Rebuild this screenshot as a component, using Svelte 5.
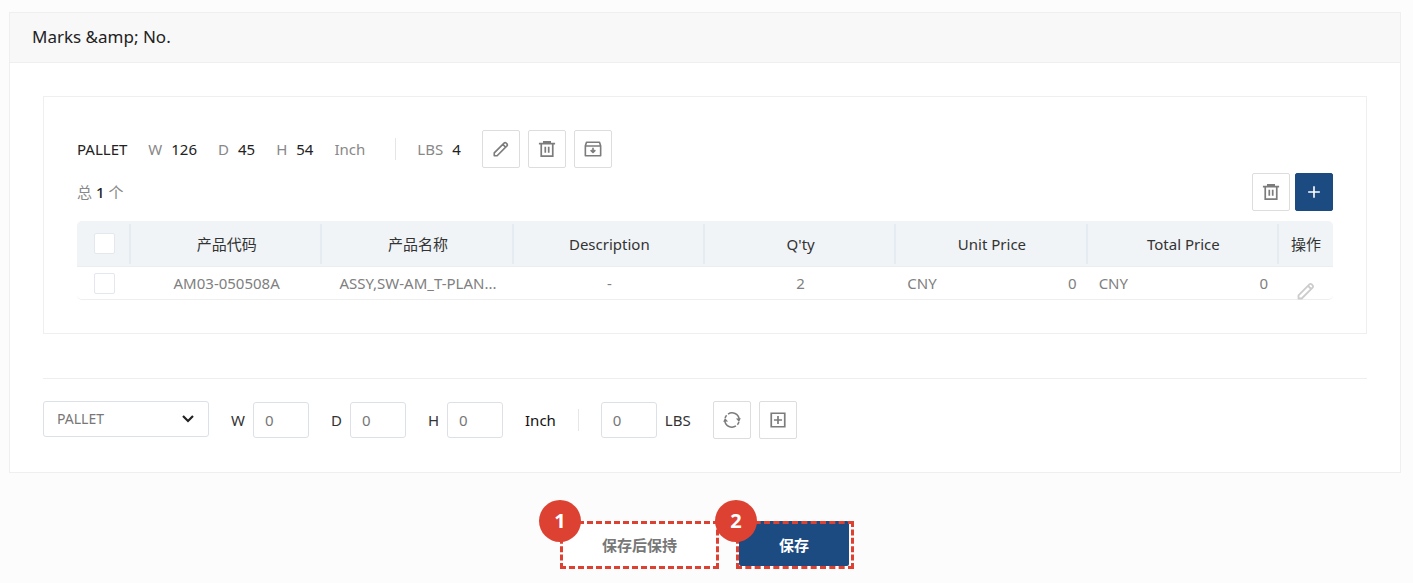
<script>
  const sizes = [
    { key: 'W', value: 126 },
    { key: 'D', value: 45 },
    { key: 'H', value: 54 }
  ];
  const columns = ['产品代码', '产品名称', 'Description', "Q'ty", 'Unit Price', 'Total Price'];
  let form = $state({ type: 'PALLET', W: '0', D: '0', H: '0', weight: '0' });
</script>

{#snippet pencil()}
  <svg viewBox="0 0 20 20" fill="none" stroke="currentColor" stroke-width="1.8" stroke-linejoin="round">
    <path d="M2.5 17.5v-3.2L13.4 3.4a1.6 1.6 0 0 1 2.3 0l.9.9a1.6 1.6 0 0 1 0 2.3L5.7 17.5zM12 4.8 15.2 8" />
  </svg>
{/snippet}

{#snippet trash()}
  <svg viewBox="0 0 20 20" fill="none" stroke="currentColor" stroke-width="1.9">
    <path d="M1 4h18M6.5 3.4V2h7v1.4M3.6 4.5v13.4h12.8V4.5M8.1 7.5v6.8M11.9 7.5v6.8" />
  </svg>
{/snippet}

<main>
  <section class="panel">
    <h2>Marks &amp;amp; No.</h2>
    <div class="body">
      <div class="card">
        <div class="summary">
          <span class="type">PALLET</span>
          {#each sizes as s}
            <span class="pair"><span>{s.key}</span><b>{s.value}</b></span>
          {/each}
          <span>Inch</span>
          <i class="bar"></i>
          <span class="pair"><span>LBS</span><b>4</b></span>
          <div class="tools">
            <button class="icon" aria-label="Edit">{@render pencil()}</button>
            <button class="icon" aria-label="Delete">{@render trash()}</button>
            <button class="icon" aria-label="Archive">
              <svg viewBox="0 0 20 20" fill="none" stroke="currentColor" stroke-width="1.8" stroke-linejoin="round">
                <path d="M1.5 6.5 2.8 2.5h14.4l1.3 4V17.5h-17zM1.5 6.7h17M10 8.5v5M7.4 11.3l2.6 2.6 2.6-2.6" />
              </svg>
            </button>
          </div>
        </div>

        <div class="listhead">
          <span class="total">总 <b>1</b> 个</span>
          <div class="tools tight">
            <button class="icon" aria-label="Delete selected">{@render trash()}</button>
            <button class="icon primary" aria-label="Add">
              <svg viewBox="0 0 20 20" fill="none" stroke="currentColor" stroke-width="1.8"><path d="M3.5 10h13M10 3.5v13" /></svg>
            </button>
          </div>
        </div>

        <table>
          <thead>
            <tr>
              <th class="edge"><input type="checkbox" aria-label="Select all" /></th>
              {#each columns as c}<th>{c}</th>{/each}
              <th class="edge">操作</th>
            </tr>
          </thead>
          <tbody>
            <tr>
              <td><input type="checkbox" aria-label="Select row" /></td>
              <td>AM03-050508A</td>
              <td>ASSY,SW-AM_T-PLAN...</td>
              <td>-</td>
              <td>2</td>
              <td><div class="price"><span>CNY</span><span>0</span></div></td>
              <td><div class="price"><span>CNY</span><span>0</span></div></td>
              <td><button class="rowedit" aria-label="Edit row">{@render pencil()}</button></td>
            </tr>
          </tbody>
        </table>
      </div>

      <form class="entry" onsubmit={(e) => e.preventDefault()}>
        <div class="select">
          <select aria-label="Type" bind:value={form.type}><option>PALLET</option></select>
          <svg class="chevron" viewBox="0 0 12 8" fill="none" stroke="#222" stroke-width="2.2"><path d="m1 1 5 5 5-5" /></svg>
        </div>
        {#each sizes as s}
          <label class="field"><span>{s.key}</span><input type="text" bind:value={form[s.key]} /></label>
        {/each}
        <span class="unit">Inch</span>
        <i class="bar"></i>
        <label class="field"><input type="text" bind:value={form.weight} /><span>LBS</span></label>
        <div class="tools">
          <button type="button" class="icon" aria-label="Reset">
            <svg viewBox="0 0 20 20" fill="none" stroke="currentColor" stroke-width="1.7">
              <path d="M5.6 3.4A8 8 0 0 1 18 9M14.4 16.6A8 8 0 0 1 2 11" />
              <path d="M4 4.8a8 8 0 0 0-1.7 3M16 15.2a8 8 0 0 0 1.7-3" />
              <path d="m14.4 8.4 5.4-.4-2 4.2zM5.6 11.6l-5.4.4 2-4.2z" fill="currentColor" stroke="none" />
            </svg>
          </button>
          <button type="button" class="icon" aria-label="Add pallet">
            <svg viewBox="0 0 20 20" fill="none" stroke="currentColor" stroke-width="1.9">
              <path d="M2.5 2.5h15v15h-15zM5.5 10h9M10 5.5v9" />
            </svg>
          </button>
        </div>
      </form>
    </div>
  </section>

  <footer>
    <div class="step keep"><em>1</em><button>保存后保持</button></div>
    <div class="step save"><em>2</em><button>保存</button></div>
  </footer>
</main>

<style>
  :global(body) { background: #fcfcfc; }
  * { box-sizing: border-box; }
  main {
    padding: 12px 12px 0 9px;
    font: 15px/20px "Noto Sans", "Noto Sans CJK SC", sans-serif;
    color: #333;
  }
  button, input, select { font: inherit; margin: 0; }
  .panel { background: #fff; border: 1px solid #efefef; }
  h2 {
    margin: 0;
    padding: 12px 22px 13px;
    font-size: 17px;
    line-height: 24px;
    font-weight: 400;
    color: #222;
    background: #f8f8f8;
    border-bottom: 1px solid #efefef;
  }
  .body { padding: 33px; }
  .card { border: 1px solid #efefef; padding: 33px; }
  .summary, .entry { display: flex; align-items: center; }
  .summary { color: #888; gap: 21px; }
  .summary b, .type { color: #222; font-weight: 400; }
  .pair { display: flex; gap: 9px; }
  .bar { width: 1px; height: 22px; background: #e6e6e6; margin-left: 9px; }
  .tools { display: flex; gap: 8px; }
  .tools.tight { gap: 5px; }
  .icon {
    width: 38px;
    height: 38px;
    padding: 0;
    display: grid;
    place-items: center;
    border: 1px solid #ddd;
    border-radius: 2px;
    background: #fff;
    color: #7c7c7c;
  }
  .icon svg { width: 18px; height: 18px; }
  .primary { background: #1c4b82; border-color: #1c4b82; color: #fff; }
  .listhead { display: flex; justify-content: space-between; align-items: center; margin: 5px 0 10px; color: #888; }
  .total b { color: #222; font-weight: 500; }

  table { width: 100%; table-layout: fixed; border-collapse: separate; border-spacing: 0; border-bottom: 1px solid #eee; border-radius: 5px; }
  th, td { padding: 0; text-align: center; font-weight: 400; white-space: nowrap; }
  th {
    height: 46px;
    color: #333;
    background: linear-gradient(#e4ebf1, #e4ebf1) right center / 2px 40px no-repeat #f0f4f7;
    border-bottom: 1px solid #ebeef0;
  }
  th.edge { width: 54px; }
  th:first-child { border-top-left-radius: 5px; }
  th:last-child { border-top-right-radius: 5px; background: #f0f4f7; }
  td { height: 32px; color: #808080; }
  .price { display: flex; justify-content: space-between; padding: 0 11px; }
  input[type="checkbox"] {
    appearance: none;
    display: block;
    width: 21px;
    height: 21px;
    margin: 0 auto;
    border: 1px solid #e3e8ee;
    border-radius: 2px;
    background: #fff;
  }
  .rowedit { display: block; margin: 14px auto 0; padding: 0; height: 18px; border: 0; background: none; color: #ccc; }
  .rowedit svg { width: 20px; height: 20px; }

  .entry { margin-top: 44px; padding-top: 22px; border-top: 1px solid #eee; }
  .select { display: grid; align-items: center; align-self: flex-start; width: 166px; margin-right: 22px; }
  .select > * { grid-area: 1 / 1; }
  .chevron { width: 12px; height: 8px; justify-self: end; margin-right: 15px; pointer-events: none; }
  select, .entry input { height: 36px; border: 1px solid #dce1e7; border-radius: 3px; background: #fff; color: #777; }
  select { appearance: none; width: 100%; padding: 0 13px; font-size: 14px; }
  .entry input { width: 56px; padding: 0 11px; }
  .field { display: flex; align-items: center; gap: 8px; margin-right: 22px; }
  .unit { color: #111; }
  .entry .bar { margin: 0 22px; }

  footer { display: flex; justify-content: center; gap: 17px; padding: 48px 0 16px 4px; }
  .step { position: relative; height: 48px; padding: 0 3px 3px; }
  .step::after { content: ""; position: absolute; inset: 0; border: 3px dashed #dd4132; pointer-events: none; }
  .step button { display: block; width: 100%; height: 45px; border: 0; padding: 3px 0 0; font-weight: 700; background: #fff; color: #777; }
  .keep { width: 159px; }
  .save { width: 118px; padding-right: 5px; }
  .save button { background: #1c4b82; color: #fff; border-radius: 2px; }
  em {
    position: absolute;
    z-index: 1;
    left: -21px;
    top: -21px;
    width: 42px;
    height: 42px;
    border-radius: 50%;
    background: #dd4132;
    color: #fff;
    font-size: 20px;
    line-height: 42px;
    font-style: normal;
    font-weight: 700;
    text-align: center;
  }
</style>
